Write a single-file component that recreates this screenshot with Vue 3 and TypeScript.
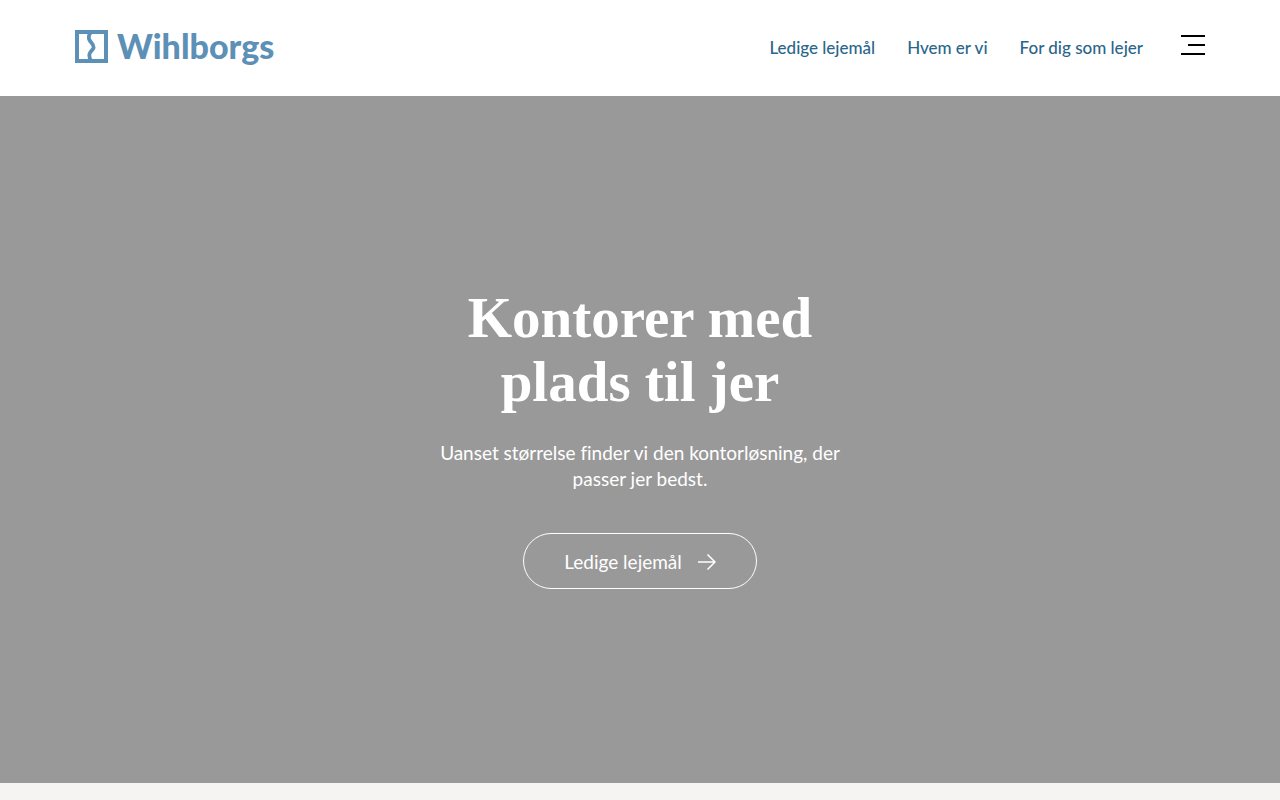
<script setup lang="ts">
interface NavLink {
  label: string
  href: string
}

const links: NavLink[] = [
  { label: 'Ledige lejemål', href: '#ledige' },
  { label: 'Hvem er vi', href: '#om' },
  { label: 'For dig som lejer', href: '#lejer' },
]
</script>

<template>
  <div class="page">
    <header class="header">
      <a class="logo" href="#" aria-label="Wihlborgs">
        <svg class="mark" viewBox="0 0 33 33" aria-hidden="true">
          <rect x="2" y="2" width="29" height="29" fill="none" stroke="currentColor" stroke-width="4" />
          <path
            d="M17.500 1C13.500 4 13 8 15 11C17 13.500 19 15 18.500 18C18 20 15 21 14.500 24C14 27 14.500 29 16.500 31"
            fill="none"
            stroke="currentColor"
            stroke-width="3.8"
          />
        </svg>
        <span class="wordmark">Wihlborgs</span>
      </a>
      <nav class="nav">
        <a v-for="link in links" :key="link.label" class="nav-link" :href="link.href">{{ link.label }}</a>
        <button class="menu" type="button" aria-label="Menu">
          <span class="bar"></span>
          <span class="bar short"></span>
          <span class="bar"></span>
        </button>
      </nav>
    </header>
    <main>
      <section class="hero">
        <h1 class="title">Kontorer med<br />plads til jer</h1>
        <p class="lead">Uanset størrelse finder vi den kontorløsning, der passer jer bedst.</p>
        <a class="cta" href="#ledige">
          <span>Ledige lejemål</span>
          <svg class="arrow" viewBox="0 0 18 16" aria-hidden="true">
            <path d="M0 8H17M9.500 0.500L17 8L9.500 15.500" fill="none" stroke="currentColor" stroke-width="1.5" />
          </svg>
        </a>
      </section>
    </main>
  </div>
</template>

<style>
body {
  margin: 0;
  background: #f5f4f2;
}
</style>

<style scoped>
.page {
  display: flex;
  flex-direction: column;
  box-sizing: border-box;
  min-height: 100vh;
  padding-bottom: 17px;
  font-family: Lato, 'Liberation Sans', sans-serif;
  font-variant-ligatures: none;
}

.header {
  display: flex;
  align-items: center;
  justify-content: space-between;
  box-sizing: border-box;
  height: 96px;
  padding: 0 75px;
  background: #fff;
}

.logo {
  display: flex;
  align-items: center;
  gap: 9px;
  color: #5d90b6;
  text-decoration: none;
}

.mark {
  width: 33px;
  height: 33px;
  margin-bottom: 4px;
}

.wordmark {
  padding-bottom: 4px;
  font-size: 34px;
  font-weight: 900;
  line-height: 40px;
}

.nav {
  display: flex;
  align-items: center;
  gap: 32px;
}

.nav-link {
  color: #29668a;
  font-size: 17px;
  font-weight: 500;
  line-height: 24px;
  text-decoration: none;
}

.menu {
  display: flex;
  flex-direction: column;
  align-items: flex-end;
  gap: 7px;
  width: 24px;
  margin: 0 0 6px 6px;
  padding: 0;
  border: 0;
  background: none;
  cursor: pointer;
}

.bar {
  width: 24px;
  height: 2px;
  background: #000;
}

.short {
  width: 17px;
}

main {
  display: flex;
  flex: 1;
}

.hero {
  display: flex;
  flex: 1;
  flex-direction: column;
  align-items: center;
  justify-content: center;
  padding: 0 24px 4px;
  background: #999;
  color: #fff;
  text-align: center;
}

.title {
  margin: 0 0 26px;
  font-family: 'Liberation Serif', serif;
  font-size: 57px;
  font-weight: 700;
  line-height: 64px;
}

.lead {
  max-width: 420px;
  margin: 0 0 41px;
  font-size: 19px;
  line-height: 26px;
}

.cta {
  display: flex;
  align-items: center;
  gap: 16px;
  box-sizing: border-box;
  height: 56px;
  padding: 0 40px;
  border: 1px solid #fff;
  border-radius: 28px;
  color: #fff;
  font-size: 19px;
  text-decoration: none;
}

.arrow {
  width: 18px;
  height: 16px;
  margin-top: 2px;
}
</style>
